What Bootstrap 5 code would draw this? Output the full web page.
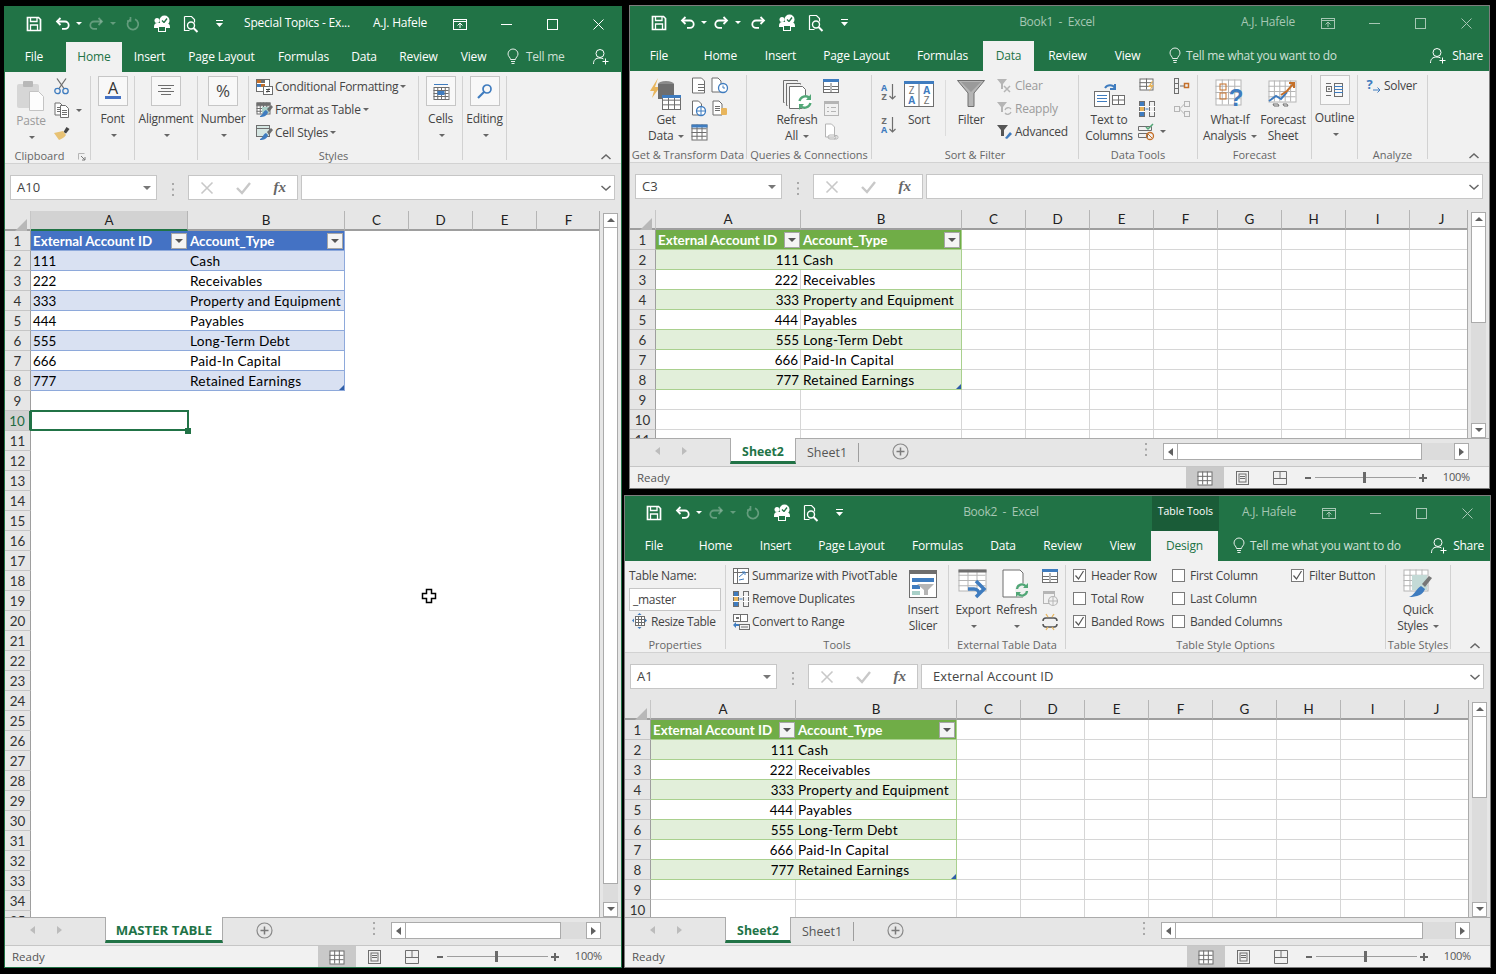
<!DOCTYPE html>
<html lang="en">
<head>
<meta charset="UTF-8" />
<title>Excel windows</title>
<link href="https://cdn.jsdelivr.net/npm/bootstrap@5.3.0/dist/css/bootstrap.min.css" rel="stylesheet" />
<style>
body { background: #000; font-family: "Open Sans", "Liberation Sans", sans-serif; font-size: 12px; color: #444; }
svg { overflow: visible; }
.desk { position: relative; width: 1496px; height: 974px; overflow: hidden; background: #000; }
.xl-win { position: absolute; background: #e6e6e6; border: 1px solid #7d7d7d; }
.win-a { left: 4px; top: 6px; width: 618px; height: 962px; border-color: #217346; }
.win-b { left: 629px; top: 5px; width: 861px; height: 484px; }
.win-c { left: 624px; top: 495px; width: 867px; height: 473px; }

.xl-title { flex: none; height: 35px; background: #217346; color: #fff; }
.qat-wrap { flex: none; padding: 0 0 2px 13px; }
.qat-btn { flex: none; height: 32px; }
.xl-name { flex: none; width: 128px; margin-left: 14px; padding-bottom: 3px; white-space: nowrap; letter-spacing: -.2px; }
.xl-doc { padding-bottom: 3px; white-space: pre; letter-spacing: -.3px; }
.win-b .xl-doc { padding-left: 18px; }
.xl-dim { color: #a6c7b4; }
.xl-user { padding: 0 10px 3px 0; white-space: nowrap; letter-spacing: -.2px; }
.wc-btn { flex: none; width: 46px; height: 32px; }
.ctx-tools { flex: none; width: 67px; height: 35px; margin-right: 23px; background: #1a5c38; color: #fff; font-size: 10.5px; padding-bottom: 3px; }

.xl-tabs { flex: none; height: 30px; background: #217346; color: #fff; }
.xl-tab { flex: none; line-height: 30px; text-align: center; white-space: nowrap; letter-spacing: -.15px; }
.xl-tab.on { background: #f1f1f1; color: #217346; }
.xl-tell { color: #cfe0d6; letter-spacing: -.26px; white-space: nowrap; }
.xl-share { white-space: nowrap; padding-right: 6px; letter-spacing: -.3px; }
.xl-share svg { margin-right: 6px; }

.xl-ribbon { flex: none; height: 92px; background: #f1f1f1; border-bottom: 1px solid #d2d2d2; position: relative; }
.rb-grp { flex: none; height: 84px; margin-top: 4px; border-right: 1px solid #d2d2d2; position: relative; letter-spacing: -.25px; }
.rb-body { height: 68px; }
.rb-lbl { position: absolute; left: 0; right: 0; bottom: -4px; height: 16px; line-height: 16px; text-align: center; color: #666; font-size: 11px; white-space: nowrap; letter-spacing: 0; }
.rb-lbl-left { padding-right: 16px; }
.rb-launch { position: absolute; right: 4px; bottom: -1px; }
.rb-col { flex: none; }
.rb-big { text-align: center; white-space: nowrap; }
.rb-ico { height: 37px; }
.rb-line { height: 16px; line-height: 16px; }
.rb-line-cr { height: 15px; line-height: 15px; }
.rb-dim { color: #9b9b9b; }
.rb-row { height: 23px; padding-bottom: 2px; white-space: nowrap; }
.rb-indent { padding-left: 3px; letter-spacing: -.35px; }
.rb-slot { flex: none; width: 19px; }
.rb-tall { height: 33px; }
.rb-box { width: 30px; height: 30px; margin: 0 auto 5px; background: #f8f8f8; border: 1px solid #c6c6c6; }
.rb-rule { width: 1px; height: 56px; margin-top: 5px; background: #dcdcdc; }
.rb-chev { position: absolute; right: 10px; bottom: 3px; }
.xl-caret { display: inline-block; width: 0; height: 0; border-left: 3px solid transparent; border-right: 3px solid transparent; border-top: 3px solid #666; vertical-align: middle; margin-left: 2px; }
.xl-field { width: 92px; height: 23px; line-height: 22px; padding-left: 3px; background: #fff; border: 1px solid #c6c6c6; }
.xl-check { flex: none; width: 13px; height: 13px; margin-right: 5px; background: #fff; border: 1px solid #7a7a7a; }
.glyph-pct { font-size: 17px; color: #444; }

.xl-fx { flex: none; height: 47px; padding: 11px 6px 0 5px; }
.fx-box { flex: none; height: 25px; background: #fff; border: 1px solid #c6c6c6; }
.fx-name { width: 147px; padding: 1px 5px 0 6px; font-size: 13px; color: #444; }
.fx-dots { flex: none; width: 31px; }
.fx-btns { width: 110px; margin-right: 3px; padding: 0 11px; }
.fx-italic { font-family: "Liberation Serif", serif; font-style: italic; font-size: 15px; font-weight: bold; color: #666; }
.fx-input { flex: 1 1 0; padding: 1px 3px 0 11px; font-size: 13px; color: #444; letter-spacing: .1px; }

.xl-sheet { min-height: 0; }
.xl-grid { flex-grow: 1; min-width: 0; overflow: hidden; background: #fff; display: grid; grid-auto-rows: 20px; align-content: start; font-family: Lato, "Liberation Sans", sans-serif; font-size: 13.4px; color: #000; border-right: 1px solid #ababab; }
.xl-corner, .xl-colh, .xl-rowh { background: #e6e6e6; }
.xl-corner { border-right: 1px solid #c6c6c6; border-bottom: 2px solid #9e9e9e; padding: 3px 2px 0 9px; }
.xl-colh { text-align: center; line-height: 18px; color: #222; border-right: 1px solid #b5b5b5; border-bottom: 2px solid #9e9e9e; }
.xl-colh.on { background: #d2d2d2; border-bottom-color: #217346; }
.xl-rowh { text-align: center; line-height: 20px; color: #333; border-right: 1px solid #9e9e9e; border-bottom: 1px solid #c6c6c6; }
.xl-rowh.on { background: #d2d2d2; color: #1d6a40; border-right: 2px solid #217346; }
.xl-cell { line-height: 20px; padding: 0 2px; font-size: 13.7px; letter-spacing: .22px; white-space: nowrap; overflow: hidden; position: relative; }
.xl-num { font-size: 13.4px; letter-spacing: 0; }
.grid-on .xl-cell { border-right: 1px solid #d6d6d6; border-bottom: 1px solid #d6d6d6; }
.xl-right { text-align: right; padding-right: 2px; }
.tb-blue { border-bottom: 1px solid #8ea9db; border-right: 0; }
.tb-blue.band { background: #d9e1f2; }
.tb-blue.head { background: #4472c4; color: #fff; font-weight: 700; font-size: 13.4px; letter-spacing: 0; }
.tb-green { border-bottom: 1px solid #a9d08e !important; }
.tb-green.band { background: #e2efda; border-right: 0; }
.tb-green.head { background: #70ad47; color: #fff; font-weight: 700; font-size: 13.4px; letter-spacing: 0; border-right: 0; }
.tb-end.tb-blue { border-right: 1px solid #8ea9db; }
.tb-end.tb-green { border-right: 1px solid #a9d08e; }
.flt-btn { position: absolute; right: 1px; top: 2px; width: 16px; height: 16px; background: #f4f4f4; border: 1px solid #a6a6a6; }
.flt-btn::after { content: ""; position: absolute; left: 3px; top: 5px; border-left: 4px solid transparent; border-right: 4px solid transparent; border-top: 4px solid #555; }
.rs-mark { position: absolute; right: 0; bottom: 0; width: 0; height: 0; border-left: 5px solid transparent; border-bottom: 5px solid #2f5ea8; }
.sel-box { position: absolute; left: -1px; top: -1px; right: -1px; bottom: 0; border: 2px solid #217346; }
.sel-cell { overflow: visible; z-index: 2; }
.sel-hdl { position: absolute; right: -3px; bottom: -3px; width: 6px; height: 6px; background: #217346; }

.xl-vs { flex: none; width: 15px; margin: 2px 3px 0 3px; background: #dcdcdc; }
.vs-btn { flex: none; height: 15px; background: #fff; border: 1px solid #ababab; }
.vs-thumb { flex: none; background: #fff; border: 1px solid #ababab; border-top: 0; }

.xl-tabbar { flex: none; height: 29px; background: #e6e6e6; border-top: 1px solid #ababab; border-bottom: 1px solid #c6c6c6; position: relative; }
.tb-nav { flex: none; width: 100px; padding-left: 25px; gap: 22px; }
.sh-tab { flex: none; height: 26px; line-height: 27px; text-align: center; white-space: nowrap; margin-top: -1px; font-size: 13.2px; }
.sh-tab.on { background: #fff; color: #217346; font-weight: 700; border-left: 1px solid #ababab; border-right: 1px solid #ababab; border-bottom: 3px solid #217346; }
.win-b .sh-tab.on, .win-c .sh-tab.on { font-size: 12.3px; }
.sh-tab.off { color: #555; height: 19px; line-height: 19px; margin-top: 4px; font-size: 12.5px; border-right: 1px solid #9e9e9e; }
.sh-plus { margin-left: 33px; }
.hs-wrap { flex: none; height: 17px; margin-right: 20px; }
.hs-dots { flex: none; margin-right: 16px; }
.hs-btn { flex: none; width: 15px; height: 17px; background: #fff; border: 1px solid #ababab; }
.hs-thumb { flex: none; height: 17px; background: #fff; border: 1px solid #ababab; border-left: 0; }
.hs-track { flex-grow: 1; height: 17px; background: #dcdcdc; }

.xl-status { flex: none; height: 21px; background: #f1f1f1; color: #555; padding-left: 7px; font-size: 11.5px; }
.st-view { flex: none; width: 38px; height: 21px; padding-right: 2px; }
.st-view.on { background: #c9c9c9; }
.st-zoom { flex: none; width: 130px; padding: 0 3px 0 4px; }
.st-sign { flex: none; width: 8px; }
.st-line { position: relative; flex-grow: 1; height: 1px; margin: 0 3px; background: #9e9e9e; }
.st-knob { position: absolute; left: 48px; top: -5px; width: 3px; height: 11px; background: #6a6a6a; }
.st-pct { flex: none; width: 40px; margin-right: 19px; text-align: right; white-space: nowrap; font-size: 11px; letter-spacing: -.2px; }
.xl-cursor { position: absolute; left: 421px; top: 588px; }
</style>
</head>
<body>
<div class="desk" id="desk"></div>

<script src="https://cdn.jsdelivr.net/npm/bootstrap@5.3.0/dist/js/bootstrap.bundle.min.js"></script>
<script>
const sv = (w, h, s) => `<svg width="${w}" height="${h}" viewBox="0 0 ${w} ${h}" fill="none">${s}</svg>`;
const CR = '<span class="xl-caret"></span>';
const gr = '#6e6e6e', bl = '#3f7cbf', or = '#c5702a', ye = '#e8b55c', gn = '#52a777', lg = '#b5b5b5';

const page = (x, y, w, h, c) => `<path d="M${x + .5} ${y + .5}h${w - 4}l3 3v${h - 3}h-${w - 1}z" stroke="${c}" fill="#fff"/>`;
const lines = (x, y, w, n, c, step = 2) => { let s = ''; for (let i = 0; i < n; i++) s += `<path d="M${x} ${y + i * step + .5}h${w}" stroke="${c}"/>`; return s; };
const table = (x, y, w, h, nx, ny, c, head) => {
    let s = `<rect x="${x + .5}" y="${y + .5}" width="${w}" height="${h}" stroke="${c}" fill="#fff"/>`;
    for (let i = 1; i < nx; i++) s += `<path d="M${x + .5 + i * w / nx} ${y}v${h}" stroke="${c}"/>`;
    for (let i = 1; i < ny; i++) s += `<path d="M${x} ${y + .5 + i * h / ny}h${w}" stroke="${c}"/>`;
    if (head) s += `<rect x="${x}" y="${y}" width="${w + 1}" height="3" fill="${head}"/>`;
    return s;
};
const brush = (x, y) => `<path d="M${x + 9} ${y}l4 -4 2 2 -4 5z" fill="${gr}"/><path d="M${x + 2} ${y + 7}c3 -1 3 -5 6 -6l2 2c-1 4 -4 5 -8 5z" fill="${bl}"/>`;
// two stacked letters as one text run
const pair = (x, a, ca, ya, b, cb, yb, size, wa, wb) => `<text text-anchor="middle" font-family="Open Sans" font-size="${size}"><tspan x="${x}" y="${ya}" fill="${ca}" font-weight="${wa}">${a}</tspan><tspan x="${x}" y="${yb}" fill="${cb}" font-weight="${wb}">${b}</tspan></text>`;

const I = {
    save: sv(16, 16, '<path d="M1.5 1.5h11l2 2v11h-13z" stroke="#fff" stroke-width="1.7"/><path d="M4.5 1.5v4h6.5v-4M4.5 14.5v-5.5h7v5.5" stroke="#fff" stroke-width="1.3"/>'),
    undo: c => sv(16, 14, `<path d="M5.5 1 2 4.5 5.5 8" stroke="${c}" stroke-width="1.8"/><path d="M2.5 4.5H10a3.7 3.7 0 0 1 0 7.4H7" stroke="${c}" stroke-width="1.8"/>`),
    redo: c => sv(16, 14, `<path d="M10.5 1 14 4.5 10.5 8" stroke="${c}" stroke-width="1.8"/><path d="M13.5 4.5H6a3.7 3.7 0 0 0 0 7.4H9" stroke="${c}" stroke-width="1.8"/>`),
    spin: sv(14, 14, '<path d="M9 2.2A5.4 5.4 0 1 1 4 2.6M4.5 0v4H1" stroke="#fff" stroke-opacity=".3" stroke-width="1.7"/>'),
    custom: sv(18, 17, '<circle cx="11.5" cy="5.5" r="5" fill="#fff"/><path d="M9 5.5l2 2 3 -4" stroke="#217346" stroke-width="1.4"/><circle cx="4" cy="5.5" r="2.5" fill="#fff"/><path d="M1 12c0 -3 1.5 -4 3 -4h9c2 0 4 1 4 4v1h-16z" fill="#fff"/><rect x="5.5" y="11.5" width="7" height="5" fill="#217346" stroke="#fff"/>'),
    preview: sv(16, 18, '<path d="M1.5 1.5h7l3 3v3M1.5 1.5v14h5" stroke="#fff" stroke-width="1.2"/><circle cx="8" cy="10.5" r="3.5" stroke="#fff" stroke-width="1.4"/><path d="M10.5 13l4 4" stroke="#fff" stroke-width="2"/>'),
    qat: sv(7, 8, '<rect width="7" height="1" fill="#fff"/><path d="M0 3h7L3.5 7z" fill="#fff"/>'),
    crW: sv(6, 4, '<path d="M0 0h6L3 3z" fill="#fff"/>'),
    crF: sv(6, 4, '<path d="M0 0h6L3 3z" fill="#fff" fill-opacity=".3"/>'),
    disp: c => sv(14, 11, `<rect x=".5" y=".5" width="13" height="10" stroke="${c}"/><path d="M1 2.5h12M7 9V4.5M4.5 6.5 7 4l2.5 2.5" stroke="${c}"/>`),
    min: c => sv(11, 1, `<rect width="11" height="1" fill="${c}"/>`),
    max: c => sv(11, 11, `<rect x=".5" y=".5" width="10" height="10" stroke="${c}"/>`),
    close: c => sv(11, 11, `<path d="M.5 .5l10 10M10.5 .5l-10 10" stroke="${c}"/>`),
    bulb: sv(12, 16, '<path d="M3.5 10.5c0 -2 -2.5 -3 -2.5 -5.5a5 5 0 0 1 10 0c0 2.5 -2.5 3.5 -2.5 5.5z" stroke="#e4eee8"/><path d="M4 12.5h4M4.5 14.5h3" stroke="#e4eee8"/>'),
    user: sv(16, 16, '<circle cx="7" cy="4.5" r="4" stroke="#fff"/><path d="M.5 15c0 -4 2 -6 6.5 -6 1.500 0 2.500 .3 3.500 1" stroke="#fff"/><path d="M9.500 12.500h6M12.500 9.500v6" stroke="#fff"/>'),

    paste: sv(30, 32, '<rect x="1" y="5" width="22" height="24" rx="2" fill="#d6d6d6"/><rect x="7" y="2" width="10" height="6" rx="1" fill="#b8b8b8"/><path d="M13.500 12.500h9l5 5v14h-14z" fill="#fdfdfd" stroke="#c4c4c4"/>'),
    cut: sv(16, 17, `<path d="M3 .5l7 10M12 .5l-7 10" stroke="${gr}" stroke-width="1.300"/><circle cx="3.500" cy="13" r="2.700" stroke="${bl}" stroke-width="1.300"/><circle cx="11.500" cy="13" r="2.700" stroke="${bl}" stroke-width="1.300"/>`),
    copy: sv(16, 15, page(.5, .5, 9, 12, gr) + lines(3, 5, 4, 3, gr) + page(6, 3, 9, 12, gr) + lines(8, 8, 5, 3, gr)),
    painter: sv(16, 14, `<path d="M9.500 6l3 -5 3 2 -3.500 4.500z" fill="#444"/><path d="M0 7l9 -2 3 4c-2 3 -5 4 -7 5z" fill="#e8c274"/>`),
    launch: sv(8, 8, `<path d="M.5 .5h6M.5 .5v6" stroke="${lg}"/><path d="M3 3l4 4M7 4v3H4" stroke="#7a7a7a"/>`),
    fontA: sv(18, 20, `<text x="9" y="13" text-anchor="middle" font-family="Open Sans" font-size="16" fill="#333">A</text><rect x="1" y="15" width="16" height="3" fill="#4472c4"/>`),
    align: sv(16, 12, `<path d="M0 .5h16M3 3.500h10M0 6.500h16M3 9.500h10" stroke="${gr}"/>`),
    cells: sv(16, 17, table(.5, 4, 15, 12, 4, 4, gr) + `<rect x="4.500" y="8" width="7" height="4" fill="${bl}"/><path d="M1 1.500h14" stroke="${bl}"/>`),
    find: sv(16, 16, `<circle cx="10" cy="6" r="4" stroke="${bl}" stroke-width="1.700"/><path d="M7 9l-6 6" stroke="${bl}" stroke-width="2.200"/>`),
    cf: sv(17, 16, `<rect x=".5" y=".5" width="13" height="12" stroke="${gr}" fill="#fff"/><rect x="1" y="1" width="4" height="3" fill="${or}"/><rect x="5" y="1" width="4" height="3" fill="${gr}"/><rect x="1" y="5" width="4" height="3" fill="${bl}"/><rect x="5" y="5" width="4" height="3" fill="${or}"/><rect x="7.500" y="7.500" width="9" height="8" stroke="${gr}" fill="#fff"/><path d="M10 10.500h4M10 12.500h4M13 9.500l-2 4" stroke="#444"/>`),
    ft: sv(18, 16, table(.5, .5, 13, 11, 4, 4, gr, gr) + `<rect x="6" y="5" width="7" height="6" fill="#a9d0c8"/>` + brush(2, 7)),
    cs: sv(18, 16, `<rect x=".5" y=".5" width="13" height="11" stroke="${gr}" fill="#d5e6e2"/><path d="M0 3.500h13" stroke="${gr}"/>` + brush(2, 7)),

    getData: sv(34, 34, `<path d="M9 1 1 14h4l-2 7 8-11H6z" fill="${ye}"/><ellipse cx="17" cy="7" rx="8" ry="3" fill="#8a8a8a"/><path d="M9 7v15h16V7" fill="#6e6e6e"/>` + table(13, 18, 18, 14, 3, 3, gr, bl)),
    fromDoc: sv(16, 17, page(1, .5, 13, 15, gr) + lines(7, 7, 7, 3, gr, 3)),
    recent: sv(18, 17, page(.5, .5, 10, 14, gr) + `<circle cx="12" cy="11" r="4.500" stroke="${bl}" stroke-width="1.300" fill="#fff"/><path d="M12 8.500V11h2" stroke="${bl}"/>`),
    web: sv(16, 17, page(1, .5, 10, 14, gr) + `<circle cx="10" cy="11" r="4.500" stroke="${bl}" stroke-width="1.300" fill="#fff"/><path d="M6 11h8M10 7v8" stroke="${bl}"/>`),
    dbDoc: sv(16, 17, page(.5, .5, 10, 14, gr) + lines(3, 6, 5, 3, gr) + `<rect x="9" y="8" width="6" height="7" rx="1" fill="${ye}"/>`),
    tbl: sv(16, 16, table(.5, .5, 15, 15, 3, 4, gr, bl)),
    refreshAll: sv(32, 32, `<path d="M2.500 2.500h14v1M2.500 2.500v22h1" stroke="${gr}"/><path d="M5.500 5.500h14v1M5.500 5.500v22h1" stroke="${gr}"/>` + page(8, 8, 17, 22, gr) + `<circle cx="24" cy="24" r="7" fill="#fff"/><path d="M18.500 23a6 6 0 0 1 10 -3M29.500 25a6 6 0 0 1 -10 3" stroke="${gn}" stroke-width="2.400"/><path d="M30 16v6h-5zM18 32v-6h5z" fill="${gn}"/>`),
    queries: sv(16, 14, `<rect x=".5" y=".5" width="15" height="13" stroke="${gr}" fill="#fff"/><rect x="0" y="0" width="16" height="3" fill="${bl}"/><path d="M1 7.500h6M1 10.500h6M9 7.500h6M9 10.500h6M8 4v9" stroke="${gr}"/>`),
    props: sv(15, 15, `<rect x=".5" y=".5" width="14" height="14" stroke="${lg}"/><rect x="0" y="0" width="15" height="3" fill="${lg}"/><path d="M3 6.500h2M7 6.500h5M3 10.500h2M7 10.500h5" stroke="${lg}"/>`),
    links: sv(16, 17, page(2, .5, 10, 13, lg) + `<path d="M7 12h4a2 2 0 0 1 0 4H7a2 2 0 0 1 0 -4zM11 12.500h3a2 2 0 0 1 0 3.500h-3" stroke="${lg}"/>`),
    az: sv(18, 20, pair(5, 'A', bl, 9, 'Z', gr, 18, 9, 700, 700) + `<path d="M13.500 2v15M10.500 14l3 3 3 -3" stroke="${gr}" stroke-width="1.200"/>`),
    za: sv(18, 20, pair(5, 'Z', gr, 9, 'A', bl, 18, 9, 700, 700) + `<path d="M13.500 2v15M10.500 14l3 3 3 -3" stroke="${gr}" stroke-width="1.200"/>`),
    sortBig: sv(30, 26, `<rect x=".5" y=".5" width="29" height="25" stroke="${gr}" fill="#fff"/><rect width="30" height="3" fill="${bl}"/><path d="M15 3v22" stroke="${gr}"/>` + pair(7.5, 'Z', gr, 13, 'A', bl, 23, 10, 400, 700) + pair(22.5, 'A', bl, 13, 'Z', gr, 23, 10, 700, 400)),
    funnel: sv(28, 28, `<path d="M.5 .5h27L17 13v13.500h-6V13z" fill="#b5b5b5" stroke="${gr}"/><path d="M4 2h20L14 12z" fill="#9a9a9a"/>`),
    fClear: sv(17, 15, `<path d="M1 1h10L7 6v5H5V6z" fill="${lg}"/><path d="M8 8l6 6M14 8l-6 6" stroke="${lg}" stroke-width="1.500"/>`),
    fReapply: sv(17, 15, `<path d="M1 1h10L7 6v5H5V6z" fill="${lg}"/><path d="M9 9a3.500 3.500 0 0 1 6 -1M15 11a3.500 3.500 0 0 1 -6 1" stroke="${lg}" stroke-width="1.300"/>`),
    fAdv: sv(17, 15, `<path d="M1 1h11L8 6v6H5V6z" fill="#555"/><path d="M9 14l5 -6 2 2 -5 5z" fill="${bl}"/>`),
    t2c: sv(31, 28, `<path d="M11 8a6 6 0 0 1 10 0M21 4v5h-5" stroke="${bl}" stroke-width="2"/><rect x=".5" y="11.500" width="15" height="15" stroke="${gr}" fill="#fff"/><path d="M3 15.500h10M3 18.500h10M3 21.500h10" stroke="${bl}"/><rect x="18.500" y="15.500" width="12" height="9" stroke="${gr}" fill="#fff"/><path d="M18.500 20h12M24.500 15.500v9" stroke="${gr}"/>`),
    flash: sv(16, 15, table(.5, .5, 13, 11, 2, 3, gr) + `<path d="M13 3l-4 6h3l-2 5 5 -7h-3l2 -4z" fill="${ye}"/>`),
    dups: sv(16, 16, `<rect x=".5" y=".5" width="5" height="15" stroke="${gr}" fill="${bl}"/><rect x="10.500" y=".5" width="5" height="15" stroke="${gr}"/><path d="M0 5.500h6M0 10.500h6M10 5.500h6M10 10.500h6" stroke="#fff"/><rect x="1" y="6" width="4" height="4" fill="${ye}"/><path d="M6.500 8h3" stroke="${bl}"/>`),
    valid: sv(18, 16, `<path d="M.5 2.500h13v4h-13zM.5 9.500h9v4h-9z" stroke="${gr}"/><path d="M8 3l2 2 5 -5" stroke="${gn}" stroke-width="1.500"/><circle cx="12" cy="12" r="3.500" stroke="${or}" stroke-width="1.300"/><path d="M10 10l4 4" stroke="${or}"/>`),
    consol: sv(16, 16, `<rect x=".5" y=".5" width="4" height="15" stroke="${gr}"/><path d="M0 5.500h5M0 10.500h5M6 8h4" stroke="${gr}"/><rect x="10.500" y="5.500" width="4" height="4" stroke="${or}" stroke-width="1.500"/>`),
    relate: sv(16, 16, `<rect x=".5" y="5.500" width="5" height="5" stroke="${lg}"/><rect x="10.500" y=".5" width="5" height="5" stroke="${lg}"/><rect x="10.500" y="10.500" width="5" height="5" stroke="${lg}"/><path d="M5.500 8l5 -5M5.500 8l5 5" stroke="${lg}"/>`),
    whatIf: sv(30, 30, table(.5, .5, 25, 25, 4, 4, lg) + `<rect x="5" y="5" width="6" height="6" stroke="${or}"/><rect x="5" y="14" width="6" height="6" stroke="${or}"/><text x="21" y="27" text-anchor="middle" font-family="Liberation Sans" font-weight="700" font-size="24" fill="${bl}">?</text>`),
    forecast: sv(30, 28, table(.5, .5, 27, 21, 5, 4, lg) + `<path d="M1 21l7 -5 5 3 6 -7" stroke="${bl}" stroke-width="2"/><path d="M13 15l6 -4 7 -8M21 3h5v5" stroke="${or}" stroke-width="2"/><path d="M5 24h5l1 2h-5zM15 24h4l1 2h-4z" stroke="${gr}"/>`),
    outline: sv(17, 14, `<rect x="0.500" y="3.500" width="5" height="5" stroke="${gr}"/><path d="M2 6h2M3 5v2" stroke="${gr}"/><path d="M0 .500h5M0 12.500h5" stroke="${gr}"/><rect x="8.500" y=".5" width="8" height="13" stroke="${gr}"/><path d="M8 3.500h9M8 6.500h9M8 9.500h9" stroke="${bl}"/>`),
    solver: sv(16, 14, `<text x="4.500" y="10" text-anchor="middle" font-family="Open Sans" font-weight="700" font-size="13" fill="${bl}">?</text><path d="M8 11h7M12.500 8.500l2.500 2.500 -2.500 2.500" stroke="${bl}"/>`),

    resize: sv(15, 17, table(3, 3, 9, 9, 3, 3, gr) + `<path d="M7.500 0l2 2h-4zM7.500 16l2 -2h-4zM0 7.500l2 -2v4zM15 7.500l-2 -2v4z" fill="${bl}"/>`),
    pivot: sv(16, 16, `<rect x=".5" y=".5" width="15" height="15" stroke="${gr}" fill="#fff"/><path d="M4.500 0v16M0 4.500h16" stroke="${gr}"/><path d="M6 12l5 -1M9 4l3 0 0 3M6 9l6 -5" stroke="${bl}"/>`),
    convert: sv(17, 16, `<rect x=".5" y=".5" width="14" height="7" stroke="${gr}" fill="#fff"/><path d="M7.500 0v8" stroke="${gr}"/><rect x="3" y="3" width="3" height="2" fill="${gr}"/><path d="M0 11l3 -3v2h4v2H3v2z" fill="${bl}"/><rect x="6.500" y="10.500" width="10" height="5" stroke="${gr}"/><path d="M8 13h7" stroke="${gr}"/>`),
    slicer: sv(28, 28, `<rect x=".5" y=".5" width="27" height="27" stroke="${gr}" fill="#fff"/><rect width="28" height="4" fill="${gr}"/><rect x="3" y="8" width="22" height="4" fill="${bl}"/><rect x="3" y="15" width="8" height="4" fill="${bl}"/><rect x="3" y="21" width="8" height="4" fill="#a8d0c8"/><path d="M8 14h17l-6 6v5h-4v-5z" fill="#b5b5b5"/>`),
    exportT: sv(31, 30, table(.5, .5, 27, 21, 3, 4, lg, gr) + `<path d="M13 21h6a5 5 0 0 1 5 5M21 13l8 8 -8 8" stroke="${bl}" stroke-width="3.500" transform="translate(-3 -1)"/>`),
    refreshD: sv(28, 30, page(.5, .5, 21, 27, gr) + `<circle cx="20" cy="21" r="7" fill="#f1f1f1"/><path d="M15 20a5 5 0 0 1 9 -2.500M25 22a5 5 0 0 1 -9 2.500" stroke="${gn}" stroke-width="2.300"/><path d="M26 14v5h-5zM14 28v-5h5z" fill="${gn}"/>`),
    browser: sv(15, 15, `<rect x=".5" y=".5" width="11" height="12" stroke="${lg}"/><rect width="12" height="3" fill="${lg}"/><circle cx="10" cy="10" r="4.500" fill="#f1f1f1" stroke="${lg}" stroke-width="1.200"/><path d="M6 10h8M10 6v8" stroke="${lg}"/>`),
    unlink: sv(16, 16, `<path d="M1 7c0 -2 1 -3 3 -3h8c2 0 3 1 3 3M1 10c0 2 1 3 3 3h8c2 0 3 -1 3 -3" stroke="#555" stroke-width="1.500"/><path d="M4 0l2 3M12 0l-2 3M4 16l2 -3M12 16l-2 -3" stroke="${ye}" stroke-width="1.300"/>`),
    quick: sv(30, 30, table(.5, .5, 24, 21, 4, 4, lg) + `<rect x="9" y="6" width="15" height="15" fill="#c3dad6"/><path d="M19 15l7 -8 3 2 -7 9z" fill="#777"/><path d="M6 28c5 -1 7 -8 12 -11l4 3c-2 6 -8 8 -16 8z" fill="${bl}"/>`),
    xMark: sv(14, 14, '<path d="M1.500 1.500l11 11M12.500 1.500l-11 11" stroke="#c8c8c8" stroke-width="1.600"/>'),
    okMark: sv(15, 14, '<path d="M1 7l5 5 8 -10" stroke="#c8c8c8" stroke-width="2.400"/>'),
    tick: sv(11, 11, '<path d="M1.500 5.500l3 3.500 5 -8" stroke="#555" stroke-width="1.200"/>'),
    chev: sv(10, 6, '<path d="M.5 5 5 1l4.500 4" stroke="#666" stroke-width="1.500"/>'),
    chevD: sv(10, 6, '<path d="M.5 1 5 5l4.500 -4" stroke="#666" stroke-width="1.500"/>'),
    nameCr: sv(8, 4, '<path d="M0 0h8L4 4z" fill="#777"/>'),
    corner: sv(13, 13, '<path d="M13 0v13H0z" fill="#b8b8b8"/>'),
    plus: sv(17, 17, '<circle cx="8.500" cy="8.500" r="7.500" stroke="#8a8a8a" stroke-width="1.200"/><path d="M4.500 8.500h8M8.500 4.500v8" stroke="#7a7a7a" stroke-width="1.500"/>'),
    dots: sv(2, 13, '<path d="M1 0v2M1 5.500v2M1 11v2" stroke="#a8a8a8" stroke-width="2"/>'),
    navL: sv(5, 8, '<path d="M5 0v8L0 4z" fill="#bcbcbc"/>'),
    navR: sv(5, 8, '<path d="M0 0v8l5-4z" fill="#bcbcbc"/>'),
    vUp: sv(8, 5, '<path d="M4 0l4 4H0z" fill="#606060"/>'),
    vDn: sv(8, 5, '<path d="M4 4l4 -4H0z" fill="#606060"/>'),
    hL: sv(5, 8, '<path d="M5 0v8L0 4z" fill="#606060"/>'),
    hR: sv(5, 8, '<path d="M0 0v8l5-4z" fill="#606060"/>'),
    vNorm: sv(15, 14, table(.5, .5, 14, 13, 3, 3, gr)),
    vPage: sv(13, 14, `<rect x=".5" y=".5" width="12" height="13" stroke="${gr}"/><rect x="3" y="3" width="7" height="8" stroke="${gr}"/><path d="M4 5.500h5M4 7.500h5" stroke="${gr}"/>`),
    vBrk: sv(14, 14, `<path d="M.5 .5h13v13H.5zM7 .5v7H.5M7 7.500h6.500" stroke="${gr}"/>`),
    zMinus: sv(7, 2, '<rect width="6" height="2" fill="#666"/>'),
    zPlus: sv(8, 8, '<path d="M0 4h8M4 0v8" stroke="#666" stroke-width="2"/>'),
};

const big = (ic, ln, dim) => `<div class="rb-big ${dim ? 'rb-dim' : ''}"><div class="rb-ico d-flex align-items-center justify-content-center">${ic}</div>${ln.map(t => `<div class="rb-line">${t}</div>`).join('')}</div>`;
const row = (ic, t, dim) => `<div class="rb-row d-flex align-items-center ${dim ? 'rb-dim' : ''}"><span class="rb-slot d-flex">${ic}</span>${t || ''}</div>`;
const stack = ics => ics.map(ic => `<div class="rb-row d-flex align-items-center justify-content-center">${ic}</div>`).join('');
const boxed = (ic, t) => `<div class="rb-big"><div class="rb-box d-flex align-items-center justify-content-center">${ic}</div><div class="rb-line">${t}</div><div class="rb-line-cr">${CR}</div></div>`;
const checkbox = (on, t) => `<div class="rb-row d-flex align-items-center"><span class="xl-check d-flex align-items-center justify-content-center">${on ? I.tick : ''}</span>${t}</div>`;

// items are [reference x, width, html]; the margin comes from the gap to the previous item
function place(x0, items) {
    let p = x0, h = '';
    items.forEach(([x, w, c]) => { h += `<div class="rb-col" style="margin-left:${x - p}px;width:${w}px">${c}</div>`; p = x + w; });
    return `<div class="rb-body d-flex">${h}</div>`;
}
function ribbon(x0, groups) {
    let x = x0, h = '';
    groups.forEach(([w, label, items, launch]) => {
        h += `<div class="rb-grp" style="width:${w}px">${place(x, items)}<div class="rb-lbl ${launch ? 'rb-lbl-left' : ''}">${label}</div>${launch ? `<span class="rb-launch d-flex">${I.launch}</span>` : ''}</div>`;
        x += w;
    });
    return `<div class="xl-ribbon d-flex">${h}<span class="rb-chev d-flex">${I.chev}</span></div>`;
}

const ribbonA = ribbon(5, [
    [86, 'Clipboard', [[11, 40, big(I.paste, ['Paste', CR], true)], [54, 32, `<div class="rb-row d-flex align-items-center">${I.cut}</div><div class="rb-row d-flex align-items-center">${I.copy}<span class="ms-1">${CR}</span></div><div class="rb-row d-flex align-items-center">${I.painter}</div>`]], true],
    [44, '', [[91, 43, boxed(I.fontA, 'Font')]]],
    [63, '', [[135, 62, boxed(I.align, 'Alignment')]]],
    [51, '', [[198, 50, boxed('<span class="glyph-pct">%</span>', 'Number')]]],
    [170, 'Styles', [[256, 160, row(I.cf, 'Conditional Formatting ' + CR) + row(I.ft, 'Format as Table ' + CR) + row(I.cs, 'Cell Styles ' + CR)]]],
    [44, '', [[419, 43, boxed(I.cells, 'Cells')]]],
    [44, '', [[463, 43, boxed(I.find, 'Editing')]]],
]);

const ribbonB = ribbon(630, [
    [117, 'Get &amp; Transform Data', [[648, 36, big(I.getData, ['Get', 'Data ' + CR])], [690, 18, stack([I.fromDoc, I.web, I.tbl])], [711, 18, stack([I.recent, I.dbDoc])]]],
    [125, 'Queries &amp; Connections', [[767, 60, big(I.refreshAll, ['Refresh', 'All ' + CR])], [823, 16, stack([I.queries, I.props, I.links])]]],
    [207, 'Sort &amp; Filter', [[879, 18, `<div class="rb-tall d-flex align-items-center">${I.az}</div><div class="rb-tall d-flex align-items-center">${I.za}</div>`], [899, 40, big(I.sortBig, ['Sort'])], [945, 1, '<div class="rb-rule"></div>'], [953, 36, big(I.funnel, ['Filter'])], [996, 80, row(I.fClear, 'Clear', true) + row(I.fReapply, 'Reapply', true) + row(I.fAdv, 'Advanced')]]],
    [119, 'Data Tools', [[1079, 60, big(I.t2c, ['Text to', 'Columns'])], [1139, 16, stack([I.flash, I.dups, I.valid])], [1158, 10, `<div class="rb-row"></div><div class="rb-row"></div><div class="rb-row d-flex align-items-center">${CR}</div>`], [1174, 16, stack([I.consol, I.relate])]]],
    [114, 'Forecast', [[1200, 60, big(I.whatIf, ['What-If', 'Analysis ' + CR])], [1258, 50, big(I.forecast, ['Forecast', 'Sheet'])]]],
    [46, '', [[1312, 45, boxed(I.outline, 'Outline')]]],
    [70, 'Analyze', [[1365, 60, row(I.solver, 'Solver')]]],
]);

const ribbonC = ribbon(625, [
    [101, 'Properties', [[629, 94, `<div class="rb-row d-flex align-items-center">Table Name:</div><div class="xl-field">_master</div><div class="rb-indent">${row(I.resize, 'Resize Table')}</div>`]]],
    [223, 'Tools', [[733, 170, row(I.pivot, 'Summarize with PivotTable') + row(I.dups, 'Remove Duplicates') + row(I.convert, 'Convert to Range')], [905, 36, big(I.slicer, ['Insert', 'Slicer'])]]],
    [117, 'External Table Data', [[950, 46, big(I.exportT, ['Export', CR])], [996, 40, big(I.refreshD, ['Refresh', CR])], [1042, 16, stack([I.queries, I.browser, I.unlink])]]],
    [320, 'Table Style Options', [[1073, 96, checkbox(1, 'Header Row') + checkbox(0, 'Total Row') + checkbox(1, 'Banded Rows')], [1172, 116, checkbox(0, 'First Column') + checkbox(0, 'Last Column') + checkbox(0, 'Banded Columns')], [1291, 90, checkbox(1, 'Filter Button')]]],
    [65, 'Table Styles', [[1388, 60, big(I.quick, ['Quick', 'Styles ' + CR])]]],
]);

const rowsData = [['External Account ID', 'Account_Type'], ['111', 'Cash'], ['222', 'Receivables'], ['333', 'Property and Equipment'], ['444', 'Payables'], ['555', 'Long-Term Debt'], ['666', 'Paid-In Capital'], ['777', 'Retained Earnings']];

function grid(c) {
    const letters = 'ABCDEFGHIJ';
    let h = `<div class="xl-corner">${I.corner}</div>`;
    c.cols.forEach((w, i) => { h += `<div class="xl-colh ${c.sel === i ? 'on' : ''}">${letters[i]}</div>`; });
    for (let r = 1; r <= c.rows; r++) {
        h += `<div class="xl-rowh ${c.selRow === r ? 'on' : ''}">${r}</div>`;
        c.cols.forEach((w, i) => {
            let cls = 'xl-cell', txt = '';
            if (r <= 8 && i < 2) {
                cls += ' ' + c.style;
                if (r === 1) cls += ' head'; else if (r % 2 === 0) cls += ' band';
                if (i === 1) cls += ' tb-end';
                if (i === 0 && r > 1) cls += ' xl-num' + (c.rightNum ? ' xl-right' : '');
                txt = rowsData[r - 1][i];
                if (r === 1) txt += '<span class="flt-btn"></span>';
                if (r === 8 && i === 1) txt += '<span class="rs-mark"></span>';
            }
            if (c.selRow === r && c.sel === i) { cls += ' sel-cell'; txt = '<span class="sel-box"></span><span class="sel-hdl"></span>'; }
            h += `<div class="${cls}">${txt}</div>`;
        });
    }
    const tpl = '26px ' + c.cols.map(w => w + 'px').join(' ');
    return `<div class="xl-grid ${c.gridOn ? 'grid-on' : ''}" style="grid-template-columns:${tpl}">${h}</div>`;
}

function tabs(list) {
    return list.map(([t, w, ml, on]) => `<div class="xl-tab ${on ? 'on' : ''}" style="width:${w}px;margin-left:${ml}px">${t}</div>`).join('');
}

function win(c) {
    const dim = c.active ? '#fff' : '#a6c7b4';
    const redoC = c.redoOn ? '#fff' : 'rgba(255,255,255,.3)';
    const qat = [[I.save, 32], [I.undo('#fff'), 26], [I.crW, 6], [I.redo(redoC), 28], [c.redoOn ? I.crW : I.crF, 6], [c.redoOn ? I.redo('#fff') : I.spin, 34], [I.custom, 24], [I.preview, 34], [I.qat, 22]]
        .map(([ic, w]) => `<span class="qat-btn d-flex align-items-center justify-content-center" style="width:${w}px">${ic}</span>`).join('');
    const wc = [I.disp(dim), I.min(dim), I.max(dim), I.close(dim)].map(ic => `<span class="wc-btn d-flex align-items-center justify-content-center">${ic}</span>`).join('');
    const title = c.active ? `<span class="xl-name">${c.doc}</span><span class="flex-grow-1"></span>`
        : `<span class="xl-doc xl-dim flex-grow-1 text-center">${c.doc}</span>`;
    return `<section class="xl-win ${c.cls} d-flex flex-column">
        <div class="xl-title d-flex align-items-center">
            <div class="qat-wrap d-flex align-items-center">${qat}</div>${title}
            ${c.ctx ? '<span class="ctx-tools d-flex align-items-center justify-content-center">Table Tools</span>' : ''}
            <span class="xl-user ${c.active ? '' : 'xl-dim'}">A.J. Hafele</span>
            <div class="d-flex">${wc}</div>
        </div>
        <div class="xl-tabs d-flex align-items-center">
            ${tabs(c.tabs)}
            <span class="d-flex" style="margin-left:${c.tell[0]}px;margin-right:${c.tell[1]}px">${I.bulb}</span>
            <span class="xl-tell">${c.tell[2]}</span>
            <span class="xl-share ms-auto d-flex align-items-center">${I.user}${c.share ? 'Share' : ''}</span>
        </div>
        ${c.ribbon}
        <div class="xl-fx d-flex align-items-start">
            <div class="fx-box fx-name d-flex align-items-center justify-content-between"><span>${c.cell}</span>${I.nameCr}</div>
            <div class="fx-dots d-flex align-items-center justify-content-center pt-2">${I.dots}</div>
            <div class="fx-box fx-btns d-flex align-items-center justify-content-between">${I.xMark}${I.okMark}<span class="fx-italic">fx</span></div>
            <div class="fx-box fx-input d-flex align-items-center justify-content-between"><span>${c.formula}</span>${I.chevD}</div>
        </div>
        <div class="xl-sheet d-flex flex-grow-1">
            ${grid(c)}
            <div class="xl-vs d-flex flex-column">
                <div class="vs-btn d-flex align-items-center justify-content-center">${I.vUp}</div>
                <div class="vs-thumb" style="height:${c.vThumb}px"></div>
                <div class="flex-grow-1"></div>
                <div class="vs-btn d-flex align-items-center justify-content-center">${I.vDn}</div>
            </div>
        </div>
        <div class="xl-tabbar d-flex align-items-start">
            <div class="tb-nav d-flex align-items-center pt-2">${I.navL}${I.navR}</div>
            <div class="sh-tab on" style="width:${c.sheetW}px">${c.sheet}</div>
            ${c.sheet2 ? `<div class="sh-tab off" style="width:63px">${c.sheet2}</div>` : ''}
            <span class="sh-plus d-flex pt-1">${I.plus}</span>
            <span class="flex-grow-1"></span>
            <span class="hs-dots d-flex pt-1">${I.dots}</span>
            <div class="hs-wrap d-flex align-items-center mt-1" style="width:${c.hs[0]}px">
                <span class="hs-btn d-flex align-items-center justify-content-center">${I.hL}</span>
                <span class="hs-thumb" style="width:${c.hs[1]}px"></span>
                <span class="hs-track"></span>
                <span class="hs-btn d-flex align-items-center justify-content-center">${I.hR}</span>
            </div>
        </div>
        <div class="xl-status d-flex align-items-center">
            <span class="me-auto">Ready</span>
            <span class="st-view on d-flex align-items-center justify-content-center">${I.vNorm}</span>
            <span class="st-view d-flex align-items-center justify-content-center">${I.vPage}</span>
            <span class="st-view d-flex align-items-center justify-content-center">${I.vBrk}</span>
            <div class="st-zoom d-flex align-items-center"><span class="st-sign d-flex justify-content-center">${I.zMinus}</span><span class="st-line"><span class="st-knob"></span></span><span class="st-sign d-flex justify-content-center">${I.zPlus}</span></div>
            <span class="st-pct">100%</span>
        </div>
    </section>`;
}

const cols = (a, b, n) => [a, b].concat(Array(n).fill(64));

document.getElementById('desk').innerHTML = [
    win({
        cls: 'win-a', active: true, doc: 'Special Topics - Ex...',
        tabs: [['File', 58, 0], ['Home', 56, 3, true], ['Insert', 55, 0], ['Page Layout', 89, 0], ['Formulas', 75, 0], ['Data', 46, 0], ['Review', 63, 0], ['View', 47, 0]],
        tell: [10, 7, 'Tell me'], ribbon: ribbonA, cell: 'A10', formula: '',
        cols: cols(157, 157, 4), rows: 35, style: 'tb-blue', sel: 0, selRow: 10, vThumb: 656,
        sheet: 'MASTER TABLE', sheetW: 118, hs: [210, 155],
    }),
    win({
        cls: 'win-b', redoOn: true, doc: 'Book1  -  Excel',
        tabs: [['File', 58, 0], ['Home', 65, 0], ['Insert', 55, 0], ['Page Layout', 97, 0], ['Formulas', 75, 0], ['Data', 51, 3, true], ['Review', 67, 0], ['View', 53, 0]],
        tell: [15, 5, 'Tell me what you want to do'], share: true, ribbon: ribbonB, cell: 'C3', formula: '',
        cols: cols(145, 161, 8), rows: 11, style: 'tb-green', rightNum: true, gridOn: true, vThumb: 96,
        sheet: 'Sheet2', sheet2: 'Sheet1', sheetW: 66, hs: [306, 244],
    }),
    win({
        cls: 'win-c', ctx: true, doc: 'Book2  -  Excel',
        tabs: [['File', 58, 0], ['Home', 65, 0], ['Insert', 55, 0], ['Page Layout', 97, 0], ['Formulas', 75, 0], ['Data', 56, 0], ['Review', 63, 0], ['View', 57, 0], ['Design', 67, 0, true]],
        tell: [15, 5, 'Tell me what you want to do'], share: true, ribbon: ribbonC, cell: 'A1', formula: 'External Account ID',
        cols: cols(145, 161, 8), rows: 10, style: 'tb-green', rightNum: true, gridOn: true, vThumb: 81,
        sheet: 'Sheet2', sheet2: 'Sheet1', sheetW: 66, hs: [309, 247],
    }),
].join('') + `<svg class="xl-cursor" width="16" height="16" viewBox="0 0 16 16"><path d="M5.500 1.500h5v4h4v5h-4v4h-5v-4h-4v-5h4z" fill="#fff" stroke="#000" stroke-width="1.500"/></svg>`;
</script>
</body>
</html>
